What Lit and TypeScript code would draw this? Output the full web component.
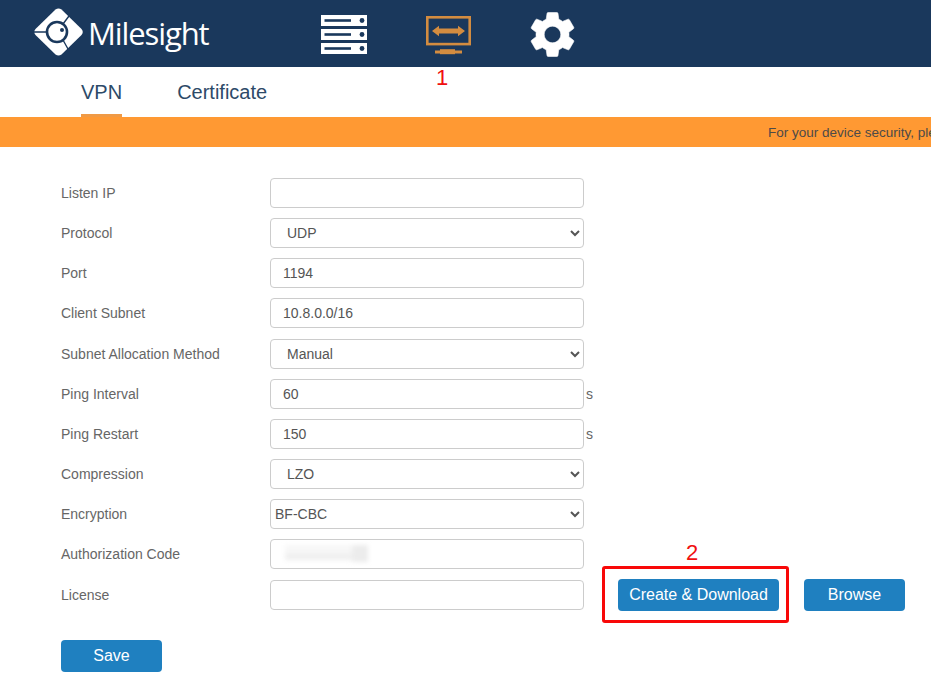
import { LitElement, html, css, nothing } from "lit";
import { customElement } from "lit/decorators.js";

type Row = { label: string; kind: "input" | "select"; value?: string; unit?: string; tight?: boolean; blur?: boolean };

const ROWS: Row[] = [
  { label: "Listen IP", kind: "input" },
  { label: "Protocol", kind: "select", value: "UDP" },
  { label: "Port", kind: "input", value: "1194" },
  { label: "Client Subnet", kind: "input", value: "10.8.0.0/16" },
  { label: "Subnet Allocation Method", kind: "select", value: "Manual" },
  { label: "Ping Interval", kind: "input", value: "60", unit: "s" },
  { label: "Ping Restart", kind: "input", value: "150", unit: "s" },
  { label: "Compression", kind: "select", value: "LZO" },
  { label: "Encryption", kind: "select", value: "BF-CBC", tight: true },
  { label: "Authorization Code", kind: "input", blur: true },
];

@customElement("app-root")
export class AppRoot extends LitElement {
  static styles = css`
    :host {
      display: block;
      width: 931px;
      height: 676px;
      overflow: hidden;
      position: relative;
      background: #fff;
      font-family: "Liberation Sans", Arial, sans-serif;
    }
    .header {
      height: 67px;
      background: #1a385c;
      display: flex;
      align-items: flex-start;
    }
    .logo {
      display: flex;
      align-items: center;
      margin: 8px 0 0 34px;
      height: 48px;
      width: 287px;
      gap: 4px;
    }
    .logo svg { flex: none; }
    .logo span {
      color: #fff;
      font-family: "Open Sans", sans-serif;
      font-size: 31px;
      letter-spacing: -1.1px;
      line-height: 48px;
      padding-top: 1px;
    }
    .nav-server { margin-top: 15px; display: block; }
    .nav-vpn { margin: 16px 0 0 59px; display: block; }
    .nav-gear { margin: 7px 0 0 54px; display: block; }
    .tabs {
      height: 50px;
      display: flex;
      padding-left: 81px;
      gap: 55px;
    }
    .tab {
      font-size: 20px;
      line-height: 50px;
      color: #2d4a68;
      height: 50px;
      box-sizing: border-box;
    }
    .tab.active { border-bottom: 3px solid #f09a45; }
    .banner {
      height: 30px;
      background: #ff9933;
      padding-left: 768px;
      box-sizing: border-box;
      width: 931px;
      overflow: hidden;
      white-space: nowrap;
      font-size: 13.5px;
      line-height: 31px;
      color: #4d4a48;
    }
    .form {
      display: flex;
      flex-direction: column;
      gap: 10.16px;
      padding: 31px 0 0 61px;
    }
    .row {
      display: flex;
      align-items: center;
      height: 30px;
    }
    .label {
      width: 209px;
      font-size: 14px;
      color: #666;
      flex: none;
    }
    .field {
      width: 314px;
      height: 30px;
      box-sizing: border-box;
      border: 1px solid #ccc;
      border-radius: 4px;
      background: #fff;
      color: #555;
      font: 14px "Liberation Sans", Arial, sans-serif;
      padding: 0 12px;
      flex: none;
      display: block;
      outline: none;
    }
    .input-wrap { position: relative; width: 314px; height: 30px; flex: none; }
    .smudge {
      position: absolute;
      left: 15px;
      top: 6px;
      width: 83px;
      height: 17px;
      background:
        linear-gradient(90deg, transparent 78%, #ececec 84%),
        linear-gradient(180deg, #f7f7f7 45%, #eeeeee 60%, #f1f1f1 80%, transparent);
      filter: blur(2px);
    }
    select.field {
      padding: 0 0 0 12px;
      -webkit-appearance: auto;
      appearance: auto;
    }
    select.field.tight { padding-left: 0; }
    .unit {
      font-size: 14px;
      color: #666;
      margin-left: 2px;
    }
    .btn {
      border: none;
      background: #1f80c0;
      color: #fff;
      border-radius: 4px;
      font: 16px "Liberation Sans", Arial, sans-serif;
      height: 32px;
      padding: 0;
      flex: none;
    }
    .create-box {
      margin-left: 18px;
      flex: none;
      width: 187px;
      height: 57px;
      box-sizing: border-box;
      border: 3px solid #f80808;
      border-radius: 3px;
      display: flex;
      align-items: center;
      padding-left: 13px;
      position: relative;
    }
    .create { width: 161px; }
    .browse { width: 101px; margin-left: 15px; }
    .mark {
      position: absolute;
      color: #f01010;
      font-family: "Liberation Sans", sans-serif;
      font-size: 22px;
      line-height: 24px;
    }
    .mark.one { left: 436px; top: 66px; }
    .mark.two { left: 81px; top: -28px; }
    .save-row { padding: 30px 0 0 61px; }
    .save { width: 101px; }
  `;

  private field(r: Row) {
    if (r.kind === "select") {
      return html`<select class="field ${r.tight ? "tight" : ""}"><option>${r.value}</option></select>`;
    }
    if (r.blur) {
      return html`<div class="input-wrap"><input class="field" /><div class="smudge"></div></div>`;
    }
    return html`<input class="field" .value=${r.value ?? ""} />`;
  }

  render() {
    return html`
      <div class="header">
        <div class="logo">
          <svg width="50" height="48" viewBox="0 0 50 48">
            <path fill="#fff" d="M21.5 1.5 Q24.5 -0.5 27.5 1.5 L47.5 21 Q50 24 47.5 27 L27.5 46.5 Q24.5 48.5 21.5 46.5 L1.5 27 Q-1 24 1.5 21 Z" />
            <circle cx="23" cy="24" r="10" fill="none" stroke="#1a385c" stroke-width="2.6" />
            <circle cx="28" cy="22" r="2" fill="#1a385c" />
            <path stroke="#1a385c" stroke-width="1.4" fill="none" d="M0 24 H13 M29 16 L35 8 M29 32 L34 41" />
          </svg>
          <span>Milesight</span>
        </div>
        <svg class="nav-server" width="46" height="39" viewBox="0 0 46 39">
          <g fill="#fff">
            <rect width="46" height="11" />
            <rect y="14" width="46" height="11" />
            <rect y="28" width="46" height="11" />
          </g>
          <g fill="#1a385c">
            <rect x="3.5" y="4.2" width="26.5" height="2.6" />
            <circle cx="41" cy="5.5" r="2.4" />
            <rect x="3.5" y="18.2" width="26.5" height="2.6" />
            <circle cx="41" cy="19.5" r="2.4" />
            <rect x="3.5" y="32.2" width="26.5" height="2.6" />
            <circle cx="41" cy="33.5" r="2.4" />
          </g>
        </svg>
        <svg class="nav-vpn" width="45" height="39" viewBox="0 0 45 39">
          <rect x="1.3" y="1.3" width="42.4" height="26.8" fill="none" stroke="#d38c40" stroke-width="2.6" />
          <path fill="#d38c40" d="M6 15 L13 9.8 V12.4 H32 V9.8 L39 15 L32 20.2 V17.6 H13 V20.2 Z" />
          <rect x="9" y="34.5" width="27" height="3" fill="#d38c40" />
          <rect x="14" y="33.2" width="15" height="5" fill="#d38c40" />
        </svg>
        <svg class="nav-gear" width="55" height="55" viewBox="0 0 24 24">
          <path fill="#fff" stroke="#fff" stroke-width="0.25" stroke-linejoin="round" d="M19.14 12.94c.04-.3.06-.61.06-.94 0-.32-.02-.64-.07-.94l2.03-1.58c.18-.14.23-.41.12-.61l-1.92-3.32c-.12-.22-.37-.29-.59-.22l-2.39.96c-.5-.38-1.03-.7-1.62-.94l-.36-2.54c-.04-.24-.24-.41-.48-.41h-3.84c-.24 0-.43.17-.47.41l-.36 2.54c-.59.24-1.13.57-1.62.94l-2.39-.96c-.22-.08-.47 0-.59.22L2.74 8.87c-.12.21-.08.47.12.61l2.03 1.58c-.05.3-.09.63-.09.94s.02.64.07.94l-2.03 1.58c-.18.14-.23.41-.12.61l1.92 3.32c.12.22.37.29.59.22l2.39-.96c.5.38 1.03.7 1.62.94l.36 2.54c.05.24.24.41.48.41h3.84c.24 0 .44-.17.47-.41l.36-2.54c.59-.24 1.13-.56 1.62-.94l2.39.96c.22.08.47 0 .59-.22l1.92-3.32c.12-.22.07-.47-.12-.61l-2.01-1.58zM12 15.6c-1.98 0-3.6-1.62-3.6-3.6s1.62-3.6 3.6-3.6 3.6 1.62 3.6 3.6-1.62 3.6-3.6 3.6z" />
        </svg>
      </div>
      <div class="tabs">
        <div class="tab active">VPN</div>
        <div class="tab">Certificate</div>
      </div>
      <div class="banner">For your device security, please change the default password</div>
      <div class="form">
        ${ROWS.map(
          (r) => html`<div class="row">
            <div class="label">${r.label}</div>
            ${this.field(r)}
            ${r.unit ? html`<span class="unit">${r.unit}</span>` : nothing}
          </div>`
        )}
        <div class="row">
          <div class="label">License</div>
          <input class="field" />
          <div class="create-box">
            <span class="mark two">2</span>
            <button class="btn create">Create &amp; Download</button>
          </div>
          <button class="btn browse">Browse</button>
        </div>
      </div>
      <div class="save-row"><button class="btn save">Save</button></div>
      <span class="mark one">1</span>
    `;
  }
}
